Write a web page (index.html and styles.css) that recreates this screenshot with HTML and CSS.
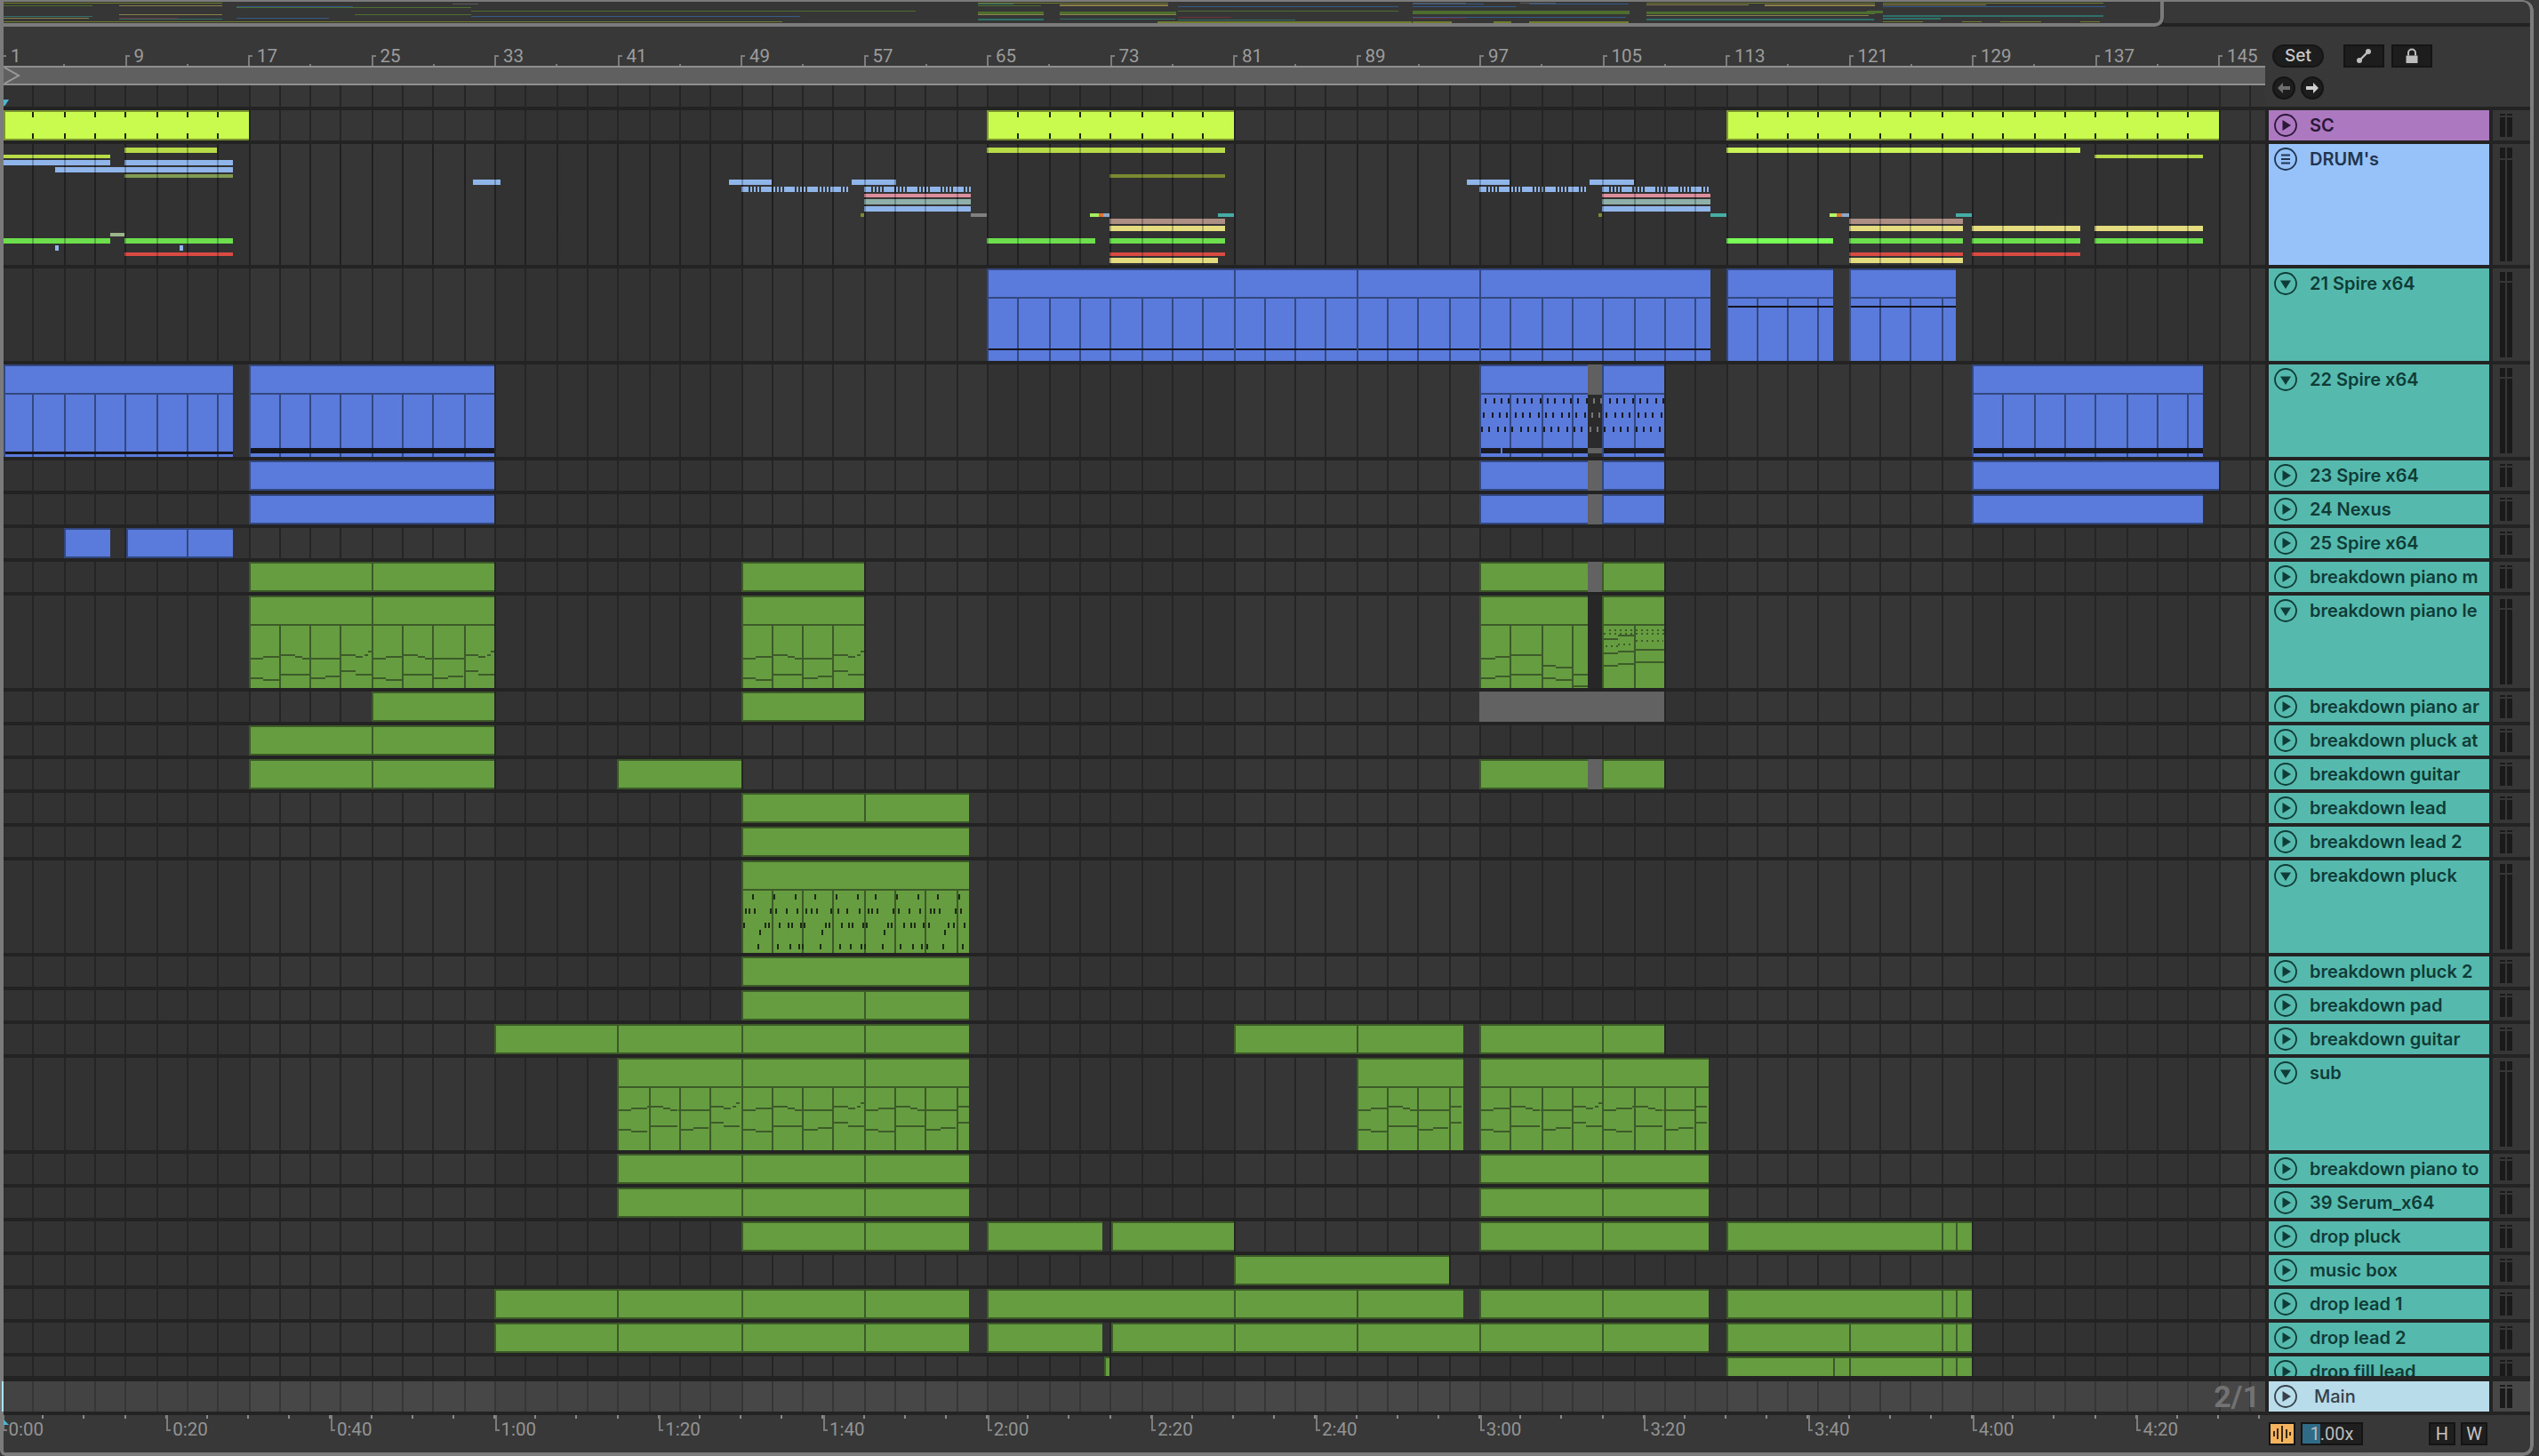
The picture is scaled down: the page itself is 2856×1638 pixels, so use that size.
FILE: index.html
```html
<!DOCTYPE html>
<html lang="en">
<head>
<meta charset="utf-8">
<title>Arrangement</title>
<link rel="stylesheet" href="styles.css">
</head>
<body>
<svg class="defs" width="0" height="0">
  <defs>
    <symbol id="i-play" viewBox="0 0 26 26"><circle cx="13" cy="13" r="12" fill="none" stroke="currentColor" stroke-width="1.8"/><path d="M9.5 7L19 13L9.5 19Z" fill="currentColor"/></symbol>
    <symbol id="i-down" viewBox="0 0 26 26"><circle cx="13" cy="13" r="12" fill="none" stroke="currentColor" stroke-width="1.8"/><path d="M7 9.5H19L13 19Z" fill="currentColor"/></symbol>
    <symbol id="i-group" viewBox="0 0 26 26"><circle cx="13" cy="13" r="12" fill="none" stroke="currentColor" stroke-width="1.8"/><path d="M8 8.5H18M8 13H18M8 17.5H18" stroke="currentColor" stroke-width="2"/></symbol>
    <path id="dash" d="M6 99h6M66 99h24M96 99h6M108 99h6M120 99h6M132 99h36M174 99h6M186 99h6M198 99h6M210 99h36M252 99h6M264 99h6M276 99h6M288 99h36M330 99h6M342 99h6M354 99h6M366 99h36M408 99h6M420 99h6" stroke-width="18" fill="none"/>
    <path id="dash-b" d="M66 99h24M96 99h6M108 99h6M120 99h6M132 99h36M174 99h6M186 99h6M198 99h6M210 99h36M252 99h6M264 99h6M276 99h6M288 99h36M330 99h6M342 99h6M354 99h6M366 99h36M408 99h6M420 99h6" stroke-width="18" fill="none"/>
    <path id="le-a" d="M66 362H108M108 356H162M162 350H216M216 356H240M240 362H264M268 362H320M320 362H372M372 350H420M420 356H444M450 350H462M462 338H474M66 428H108M108 434H162M168 416H210M210 416H264M270 428H318M318 422H368M372 404H420M420 416H474" stroke-width="6" fill="none"/>
    <path id="le-b" d="M66 362H108M108 356H162M162 350H216M216 356H240M240 362H264M268 362H320M320 362H372M372 350H414M66 428H108M108 434H162M168 416H210M210 416H264M270 428H318M318 422H368M372 404H414" stroke-width="6" fill="none"/>
  </defs>
</svg>

<div class="app">
  <div class="play-line"></div>
  <div class="overview-row">
    <div class="overview">
      <svg class="notes" width="2432" height="26" shape-rendering="crispEdges">
        <g fill="#6f7d2c"><rect x="4" y="3" width="246" height="1"/><rect x="1100" y="3" width="214" height="1"/><rect x="1852" y="3" width="257" height="1"/><rect x="2118" y="3" width="248" height="1"/><rect x="250" y="24" width="280" height="1"/><rect x="1302" y="24" width="286" height="2"/><rect x="1589" y="24" width="44" height="2"/><rect x="1680" y="24" width="20" height="2"/><rect x="1720" y="24" width="112" height="2"/><rect x="2118" y="24" width="45" height="1"/><rect x="2207" y="24" width="22" height="1"/><rect x="2250" y="24" width="46" height="1"/><rect x="2340" y="24" width="22" height="1"/><rect x="4" y="24" width="246" height="1"/><rect x="530" y="24" width="350" height="1"/></g>
        <g fill="#4e6e2f"><rect x="4" y="6" width="100" height="1"/><rect x="1100" y="6" width="71" height="1"/><rect x="266" y="8" width="264" height="1"/><rect x="399" y="16" width="131" height="1"/><rect x="530" y="12" width="500" height="1"/><rect x="1325" y="12" width="248" height="1"/><rect x="1589" y="12" width="244" height="4"/><rect x="1852" y="13" width="257" height="3"/><rect x="2100" y="12" width="18" height="3"/><rect x="1100" y="13" width="74" height="3"/><rect x="1192" y="13" width="131" height="3"/></g>
        <g fill="#8a7f4a"><rect x="134" y="6" width="116" height="1"/><rect x="1192" y="5" width="122" height="2"/><rect x="134" y="16" width="116" height="1"/><rect x="1100" y="16" width="74" height="1"/><rect x="1192" y="16" width="131" height="1"/><rect x="1852" y="17" width="250" height="1"/><rect x="1852" y="5" width="115" height="1"/><rect x="1985" y="5" width="124" height="2"/><rect x="2118" y="5" width="116" height="1"/><rect x="4" y="20" width="96" height="1"/></g>
        <g fill="#365a88"><rect x="266" y="7" width="131" height="1"/><rect x="1325" y="7" width="248" height="1"/><rect x="1589" y="7" width="116" height="1"/><rect x="1720" y="4" width="112" height="1"/><rect x="1589" y="4" width="80" height="1"/><rect x="2118" y="7" width="250" height="1"/><rect x="266" y="20" width="104" height="1"/><rect x="530" y="18" width="370" height="1"/><rect x="1589" y="19" width="240" height="1"/></g>
        <g fill="#2f6f6a"><rect x="134" y="21" width="116" height="1"/><rect x="4" y="18" width="100" height="1"/><rect x="1100" y="21" width="74" height="2"/><rect x="1192" y="21" width="130" height="1"/><rect x="1325" y="22" width="132" height="1"/><rect x="1852" y="21" width="256" height="2"/><rect x="2118" y="17" width="248" height="2"/><rect x="2118" y="20" width="65" height="2"/><rect x="1100" y="4" width="40" height="1"/></g>
        <g fill="#6d2f3a"><rect x="134" y="20" width="66" height="1"/><rect x="1325" y="19" width="60" height="1"/><rect x="1589" y="20" width="60" height="1"/></g>
        <g fill="#5a5a5a"><rect x="509" y="4" width="29" height="1"/><rect x="1589" y="3" width="60" height="1"/><rect x="1710" y="3" width="40" height="1"/></g>
      </svg>
    </div>
    <div class="overview-tail"></div>
  </div>

  <div class="top-row">
    <div class="timeline">
      <div class="ruler">
        <div class="mark">1</div><div class="mark">9</div><div class="mark">17</div><div class="mark">25</div><div class="mark">33</div><div class="mark">41</div><div class="mark">49</div><div class="mark">57</div><div class="mark">65</div><div class="mark">73</div><div class="mark">81</div><div class="mark">89</div><div class="mark">97</div><div class="mark">105</div><div class="mark">113</div><div class="mark">121</div><div class="mark">129</div><div class="mark">137</div><div class="mark">145</div>
      </div>
      <div class="loop-strip">
        <svg class="loop-start" width="20" height="18"><path d="M1 0L17 9L1 18" fill="none" stroke="#9a9a9a" stroke-width="2"/></svg>
      </div>
      <div class="lane lane-blank">
        <svg class="notes" width="20" height="24"><path d="M4 16H10L5.5 23H4Z" fill="#4fb6cf"/></svg>
      </div>
    </div>
    <div class="controls">
      <div class="ctl-line">
        <div class="pill">Set</div>
        <div class="sq sq-first"><svg width="18" height="18" viewBox="0 0 18 18"><path d="M4 14L14 4" stroke="#bdbdbd" stroke-width="2.4"/><circle cx="4" cy="14" r="3" fill="#bdbdbd"/><circle cx="14" cy="4" r="3" fill="#bdbdbd"/></svg></div>
        <div class="sq"><svg width="18" height="18" viewBox="0 0 18 18"><path d="M2.500 8.500H15.500V17H2.500Z" fill="#bdbdbd"/><path d="M5 8.500V5.500a4 4 0 0 1 8 0V8.500" fill="none" stroke="#bdbdbd" stroke-width="2"/></svg></div>
      </div>
      <div class="ctl-line ctl-arrows">
        <div class="round"><svg width="16" height="14" viewBox="0 0 16 14"><path d="M7 1L1 7L7 13V9H15V5H7Z" fill="#6e6e6e"/></svg></div>
        <div class="round"><svg width="16" height="14" viewBox="0 0 16 14"><path d="M9 1L15 7L9 13V9H1V5H9Z" fill="#cfcfcf"/></svg></div>
      </div>
    </div>
  </div>

  <div class="tracks">

    <div class="track t34">
      <div class="lane">
        <div class="clip lime" style="left:4px;width:276px"></div>
        <div class="clip lime" style="left:1110px;width:278px"></div>
        <div class="clip lime" style="left:1942px;width:554px"></div>
      </div>
      <div class="hdr purple"><svg class="ic"><use href="#i-play"/></svg><span class="nm">SC</span></div>
      <div class="meter"><i></i><i></i></div>
    </div>

    <div class="track t136">
      <div class="lane">
        <svg class="notes" width="2548" height="136" shape-rendering="crispEdges">
          <g transform="translate(0,-162)">
            <g fill="#b7dc48"><rect x="140" y="166" width="104" height="6"/><rect x="4" y="174" width="120" height="4"/><rect x="1110" y="166" width="268" height="6"/><rect x="2356" y="174" width="122" height="4"/></g>
            <rect x="1942" y="166" width="398" height="6" fill="#c9f556"/>
            <g fill="#8fb5ea"><rect x="4" y="180" width="120" height="6"/><rect x="140" y="180" width="122" height="6"/><rect x="62" y="188" width="200" height="6"/><rect x="62" y="276" width="4" height="6"/><rect x="202" y="276" width="4" height="6"/><rect x="532" y="202" width="31" height="6"/><rect x="820" y="202" width="48" height="6"/><rect x="958" y="202" width="50" height="6"/><rect x="1650" y="202" width="48" height="6"/><rect x="1788" y="202" width="50" height="6"/><rect x="972" y="232" width="120" height="6"/><rect x="1802" y="232" width="122" height="6"/></g>
            <rect x="140" y="196" width="122" height="4" fill="#7f9c52"/>
            <rect x="1248" y="196" width="130" height="4" fill="#7a8a30"/>
            <rect x="124" y="262" width="16" height="4" fill="#9cb58a"/>
            <g fill="#6be04c"><rect x="4" y="268" width="120" height="6"/><rect x="140" y="268" width="122" height="6"/><rect x="1110" y="268" width="122" height="6"/><rect x="1248" y="268" width="130" height="6"/><rect x="2080" y="268" width="128" height="6"/><rect x="2218" y="268" width="122" height="6"/><rect x="2356" y="268" width="122" height="6"/></g>
            <rect x="1942" y="268" width="120" height="6" fill="#78ff58"/>
            <g fill="#d84a42"><rect x="140" y="284" width="122" height="4"/><rect x="1248" y="284" width="130" height="4"/><rect x="2080" y="284" width="128" height="4"/><rect x="2218" y="284" width="122" height="4"/></g>
            <g fill="#dd8e9c"><rect x="972" y="218" width="120" height="4"/><rect x="1802" y="218" width="122" height="4"/></g>
            <g fill="#8fb0a8"><rect x="972" y="224" width="120" height="6"/><rect x="1802" y="224" width="122" height="6"/></g>
            <g fill="#808080"><rect x="1092" y="240" width="18" height="4"/></g>
            <rect x="968" y="240" width="4" height="4" fill="#7a8a30"/><rect x="1798" y="240" width="4" height="4" fill="#7a8a30"/>
            <g fill="#46aca6"><rect x="1370" y="240" width="18" height="4"/><rect x="1924" y="240" width="18" height="4"/><rect x="2200" y="240" width="18" height="4"/></g>
            <rect x="1226" y="240" width="10" height="4" fill="#a6ee60"/><rect x="1236" y="240" width="5" height="4" fill="#e07030"/><rect x="1241" y="240" width="7" height="4" fill="#8ea8c8"/>
            <rect x="2058" y="240" width="8" height="4" fill="#b6f868"/><rect x="2066" y="240" width="6" height="4" fill="#e07030"/><rect x="2072" y="240" width="8" height="4" fill="#8ea8c8"/>
            <g fill="#ae8f84"><rect x="1248" y="246" width="130" height="6"/><rect x="2080" y="246" width="128" height="6"/></g>
            <g fill="#e4dc7e"><rect x="1248" y="254" width="130" height="6"/><rect x="1248" y="290" width="122" height="6"/><rect x="2080" y="254" width="128" height="6"/><rect x="2080" y="290" width="128" height="6"/><rect x="2218" y="254" width="122" height="6"/><rect x="2356" y="254" width="122" height="6"/></g>
          </g>
          <g stroke="#8fb5ea">
            <use href="#dash" transform="translate(1780,18) scale(.3333)"/>
            <use href="#dash-b" transform="translate(1642,18) scale(.3333)"/>
            <use href="#dash-b" transform="translate(950,18) scale(.3333)"/>
            <use href="#dash-b" transform="translate(812,18) scale(.3333)"/>
          </g>
        </svg>
        <div class="over"></div>
      </div>
      <div class="hdr blue"><svg class="ic"><use href="#i-group"/></svg><span class="nm">DRUM's</span></div>
      <div class="meter seg12"><i></i><i></i></div>
    </div>

    <div class="track t104">
      <div class="lane">
        <div class="clip b tall" style="left:1110px;width:278px"><div class="title"></div><div class="body"><span class="bk k92"></span></div></div>
        <div class="clip b tall" style="left:1388px;width:138px"><div class="title"></div><div class="body"><span class="bk k92"></span></div></div>
        <div class="clip b tall" style="left:1526px;width:138px"><div class="title"></div><div class="body"><span class="bk k92"></span></div></div>
        <div class="clip b tall" style="left:1664px;width:260px"><div class="title"></div><div class="body"><span class="bk k92"></span></div></div>
        <div class="clip b tall" style="left:1942px;width:120px"><div class="title"></div><div class="body"><span class="bk k44"></span></div></div>
        <div class="clip b tall" style="left:2080px;width:120px"><div class="title"></div><div class="body"><span class="bk k44"></span></div></div>
      </div>
      <div class="hdr teal"><svg class="ic"><use href="#i-down"/></svg><span class="nm">21 Spire x64</span></div>
      <div class="meter seg10"><i></i><i></i></div>
    </div>

    <div class="track t104">
      <div class="lane">
        <div class="clip b tall" style="left:4px;width:258px"><div class="title"></div><div class="body"><span class="bk k100"></span></div></div>
        <div class="clip b tall" style="left:280px;width:276px"><div class="title"></div><div class="body"><span class="bk k96"></span></div></div>
        <div class="clip b tall" style="left:1664px;width:122px"><div class="title"></div><div class="body"></div></div>
        <div class="clip mutegap" style="left:1786px;width:16px"></div>
        <div class="clip b tall" style="left:1802px;width:70px"><div class="title"></div><div class="body"></div></div>
        <div class="clip b tall" style="left:2218px;width:260px"><div class="title"></div><div class="body"><span class="bk k96"></span></div></div>
        <svg class="notes" width="2548" height="104" shape-rendering="crispEdges">
          <g transform="translate(1640,-10) scale(.3333)" fill="none">
            <path stroke="#1a1a22" stroke-width="6" d="M93 144v18M123 144v18M147 144v18M171 144v18M201 144v18M225 144v18M249 144v18M279 144v18M303 144v18M327 144v18M357 144v18M381 144v18M405 144v18M435 144v18M513 144v18M537 144v18M561 144v18M591 144v18M615 144v18M639 144v18M669 144v18M693 144v18M87 192v18M117 192v18M141 192v18M165 192v18M195 192v18M219 192v18M243 192v18M273 192v18M297 192v18M321 192v18M351 192v18M375 192v18M399 192v18M429 192v18M501 192v18M531 192v18M555 192v18M579 192v18M609 192v18M633 192v18M657 192v18M687 192v18M81 240v18M105 240v18M135 240v18M159 240v18M183 240v18M213 240v18M237 240v18M261 240v18M291 240v18M315 240v18M339 240v18M369 240v18M393 240v18M417 240v18M495 240v18M525 240v18M549 240v18M573 240v18M603 240v18M627 240v18M651 240v18M681 240v18"/>
            <path stroke="#777" stroke-width="6" d="M459 144v18M483 144v18M453 192v18M477 192v18M447 240v18M471 240v18"/>
            <path stroke="#1a1a22" stroke-width="18" d="M78 321H144M150 321H438M492 321H696"/>
          </g>
        </svg>
      </div>
      <div class="hdr teal"><svg class="ic"><use href="#i-down"/></svg><span class="nm">22 Spire x64</span></div>
      <div class="meter seg10"><i></i><i></i></div>
    </div>

    <div class="track t34">
      <div class="lane">
        <div class="clip b" style="left:280px;width:276px"></div>
        <div class="clip b" style="left:1664px;width:122px"></div><div class="clip mute" style="left:1786px;width:16px"></div><div class="clip b" style="left:1802px;width:70px"></div>
        <div class="clip b" style="left:2218px;width:278px"></div>
      </div>
      <div class="hdr teal"><svg class="ic"><use href="#i-play"/></svg><span class="nm">23 Spire x64</span></div>
      <div class="meter"><i></i><i></i></div>
    </div>

    <div class="track t34">
      <div class="lane">
        <div class="clip b" style="left:280px;width:276px"></div>
        <div class="clip b" style="left:1664px;width:122px"></div><div class="clip mute" style="left:1786px;width:16px"></div><div class="clip b" style="left:1802px;width:70px"></div>
        <div class="clip b" style="left:2218px;width:260px"></div>
      </div>
      <div class="hdr teal"><svg class="ic"><use href="#i-play"/></svg><span class="nm">24 Nexus</span></div>
      <div class="meter"><i></i><i></i></div>
    </div>

    <div class="track t34">
      <div class="lane">
        <div class="clip b" style="left:72px;width:52px"></div>
        <div class="clip b" style="left:142px;width:68px"></div>
        <div class="clip b" style="left:210px;width:52px"></div>
      </div>
      <div class="hdr teal"><svg class="ic"><use href="#i-play"/></svg><span class="nm">25 Spire x64</span></div>
      <div class="meter"><i></i><i></i></div>
    </div>

    <div class="track t34">
      <div class="lane">
        <div class="clip g" style="left:280px;width:138px"></div><div class="clip g" style="left:418px;width:138px"></div>
        <div class="clip g" style="left:834px;width:138px"></div>
        <div class="clip g" style="left:1664px;width:122px"></div><div class="clip mute" style="left:1786px;width:16px"></div><div class="clip g" style="left:1802px;width:70px"></div>
      </div>
      <div class="hdr teal"><svg class="ic"><use href="#i-play"/></svg><span class="nm">breakdown piano m</span></div>
      <div class="meter"><i></i><i></i></div>
    </div>

    <div class="track t104">
      <div class="lane">
        <div class="clip g tall" style="left:280px;width:138px"><div class="title"></div><div class="body"></div></div>
        <div class="clip g tall" style="left:418px;width:138px"><div class="title"></div><div class="body"></div></div>
        <div class="clip g tall" style="left:834px;width:138px"><div class="title"></div><div class="body"></div></div>
        <div class="clip g tall" style="left:1664px;width:122px"><div class="title"></div><div class="body"></div></div>
        <div class="clip void" style="left:1786px;width:16px"></div>
        <div class="clip g tall" style="left:1802px;width:70px"><div class="title"></div><div class="body"></div></div>
        <svg class="notes" width="2548" height="104" shape-rendering="crispEdges">
          <g stroke="#3e5c2a">
            <use href="#le-a" transform="translate(260,-50) scale(.3333)"/>
            <use href="#le-a" transform="translate(398,-50) scale(.3333)"/>
            <use href="#le-a" transform="translate(814,-50) scale(.3333)"/>
            <g transform="translate(1640,-270) scale(.3333)" fill="none" stroke-width="6">
              <path d="M78 1022H126M126 1016H180M180 1010H282M288 1046H330M330 1052H384M390 1076H438M78 1088H126M126 1082H174M180 1076H282M288 1088H330M330 1094H384M390 1116H438"/>
              <path d="M492 957H540M540 945H594M492 1005H540M540 999H594M600 993H696M492 1047H540M540 1041H594M600 1035H696"/>
              <path stroke-dasharray="6 12" d="M492 939H696M498 981H540M540 975H590M600 963H692M510 927H696"/>
            </g>
          </g>
        </svg>
      </div>
      <div class="hdr teal"><svg class="ic"><use href="#i-down"/></svg><span class="nm">breakdown piano le</span></div>
      <div class="meter seg10"><i></i><i></i></div>
    </div>

    <div class="track t34">
      <div class="lane">
        <div class="clip g" style="left:418px;width:138px"></div>
        <div class="clip g" style="left:834px;width:138px"></div>
        <div class="clip mute" style="left:1664px;width:208px"></div>
      </div>
      <div class="hdr teal"><svg class="ic"><use href="#i-play"/></svg><span class="nm">breakdown piano ar</span></div>
      <div class="meter"><i></i><i></i></div>
    </div>

    <div class="track t34">
      <div class="lane">
        <div class="clip g" style="left:280px;width:138px"></div><div class="clip g" style="left:418px;width:138px"></div>
      </div>
      <div class="hdr teal"><svg class="ic"><use href="#i-play"/></svg><span class="nm">breakdown pluck at</span></div>
      <div class="meter"><i></i><i></i></div>
    </div>

    <div class="track t34">
      <div class="lane">
        <div class="clip g" style="left:280px;width:138px"></div><div class="clip g" style="left:418px;width:138px"></div>
        <div class="clip g" style="left:694px;width:140px"></div>
        <div class="clip g" style="left:1664px;width:122px"></div><div class="clip mute" style="left:1786px;width:16px"></div><div class="clip g" style="left:1802px;width:70px"></div>
      </div>
      <div class="hdr teal"><svg class="ic"><use href="#i-play"/></svg><span class="nm">breakdown guitar</span></div>
      <div class="meter"><i></i><i></i></div>
    </div>

    <div class="track t34">
      <div class="lane">
        <div class="clip g" style="left:834px;width:138px"></div><div class="clip g" style="left:972px;width:118px"></div>
      </div>
      <div class="hdr teal"><svg class="ic"><use href="#i-play"/></svg><span class="nm">breakdown lead</span></div>
      <div class="meter"><i></i><i></i></div>
    </div>

    <div class="track t34">
      <div class="lane">
        <div class="clip g" style="left:834px;width:256px"></div>
      </div>
      <div class="hdr teal"><svg class="ic"><use href="#i-play"/></svg><span class="nm">breakdown lead 2</span></div>
      <div class="meter"><i></i><i></i></div>
    </div>

    <div class="track t104">
      <div class="lane">
        <div class="clip g tall" style="left:834px;width:256px"><div class="title"></div><div class="body"></div></div>
        <svg class="notes" width="2548" height="104" shape-rendering="crispEdges">
          <path transform="translate(820,-18) scale(.3333)" fill="none" stroke="#1d2a14" stroke-width="6" d="M81 168v18M153 168v18M225 168v18M291 168v18M363 168v18M435 168v18M495 168v18M567 168v18M639 168v18M705 168v18M777 168v18M57 216v18M69 216v18M87 216v18M141 216v18M159 216v18M195 216v18M231 216v18M261 216v18M279 216v18M297 216v18M345 216v18M369 216v18M399 216v18M441 216v18M471 216v18M483 216v18M501 216v18M555 216v18M573 216v18M609 216v18M645 216v18M681 216v18M693 216v18M711 216v18M765 216v18M783 216v18M51 264v18M123 264v18M135 264v18M171 264v18M201 264v18M213 264v18M243 264v18M255 264v18M327 264v18M339 264v18M381 264v18M405 264v18M417 264v18M453 264v18M465 264v18M537 264v18M549 264v18M591 264v18M615 264v18M627 264v18M657 264v18M675 264v18M741 264v18M759 264v18M795 264v18M105 288v18M315 288v18M525 288v18M729 288v18M99 336v18M165 336v18M207 336v18M237 336v18M249 336v18M309 336v18M375 336v18M411 336v18M447 336v18M459 336v18M519 336v18M579 336v18M621 336v18M651 336v18M669 336v18M723 336v18M789 336v18"/>
        </svg>
      </div>
      <div class="hdr teal"><svg class="ic"><use href="#i-down"/></svg><span class="nm">breakdown pluck</span></div>
      <div class="meter seg10"><i></i><i></i></div>
    </div>

    <div class="track t34">
      <div class="lane">
        <div class="clip g" style="left:834px;width:256px"></div>
      </div>
      <div class="hdr teal"><svg class="ic"><use href="#i-play"/></svg><span class="nm">breakdown pluck 2</span></div>
      <div class="meter"><i></i><i></i></div>
    </div>

    <div class="track t34">
      <div class="lane">
        <div class="clip g" style="left:834px;width:138px"></div><div class="clip g" style="left:972px;width:118px"></div>
      </div>
      <div class="hdr teal"><svg class="ic"><use href="#i-play"/></svg><span class="nm">breakdown pad</span></div>
      <div class="meter"><i></i><i></i></div>
    </div>

    <div class="track t34">
      <div class="lane">
        <div class="clip g" style="left:556px;width:138px"></div><div class="clip g" style="left:694px;width:140px"></div><div class="clip g" style="left:834px;width:138px"></div><div class="clip g" style="left:972px;width:118px"></div>
        <div class="clip g" style="left:1388px;width:138px"></div><div class="clip g" style="left:1526px;width:120px"></div>
        <div class="clip g" style="left:1664px;width:138px"></div><div class="clip g" style="left:1802px;width:70px"></div>
      </div>
      <div class="hdr teal"><svg class="ic"><use href="#i-play"/></svg><span class="nm">breakdown guitar</span></div>
      <div class="meter"><i></i><i></i></div>
    </div>

    <div class="track t104">
      <div class="lane">
        <div class="clip g tall" style="left:694px;width:140px"><div class="title"></div><div class="body"></div></div>
        <div class="clip g tall" style="left:834px;width:138px"><div class="title"></div><div class="body"></div></div>
        <div class="clip g tall" style="left:972px;width:118px"><div class="title"></div><div class="body"></div></div>
        <div class="clip g tall" style="left:1526px;width:120px"><div class="title"></div><div class="body"></div></div>
        <div class="clip g tall" style="left:1664px;width:138px"><div class="title"></div><div class="body"></div></div>
        <div class="clip g tall" style="left:1802px;width:120px"><div class="title"></div><div class="body"></div></div>
        <svg class="notes" width="2548" height="104" shape-rendering="crispEdges">
          <g stroke="#3e5c2a">
            <use href="#le-a" transform="translate(674,-62) scale(.3333)"/>
            <use href="#le-a" transform="translate(814,-62) scale(.3333)"/>
            <use href="#le-b" transform="translate(952,-62) scale(.3333)"/>
            <use href="#le-b" transform="translate(1506,-62) scale(.3333)"/>
            <use href="#le-a" transform="translate(1644,-62) scale(.3333)"/>
            <use href="#le-b" transform="translate(1782,-62) scale(.3333)"/>
          </g>
        </svg>
      </div>
      <div class="hdr teal"><svg class="ic"><use href="#i-down"/></svg><span class="nm">sub</span></div>
      <div class="meter seg10"><i></i><i></i></div>
    </div>

    <div class="track t34">
      <div class="lane">
        <div class="clip g" style="left:694px;width:140px"></div><div class="clip g" style="left:834px;width:138px"></div><div class="clip g" style="left:972px;width:118px"></div>
        <div class="clip g" style="left:1664px;width:138px"></div><div class="clip g" style="left:1802px;width:120px"></div>
      </div>
      <div class="hdr teal"><svg class="ic"><use href="#i-play"/></svg><span class="nm">breakdown piano to</span></div>
      <div class="meter"><i></i><i></i></div>
    </div>

    <div class="track t34">
      <div class="lane">
        <div class="clip g" style="left:694px;width:140px"></div><div class="clip g" style="left:834px;width:138px"></div><div class="clip g" style="left:972px;width:118px"></div>
        <div class="clip g" style="left:1664px;width:138px"></div><div class="clip g" style="left:1802px;width:120px"></div>
      </div>
      <div class="hdr teal"><svg class="ic"><use href="#i-play"/></svg><span class="nm">39 Serum_x64</span></div>
      <div class="meter"><i></i><i></i></div>
    </div>

    <div class="track t34">
      <div class="lane">
        <div class="clip g" style="left:834px;width:138px"></div><div class="clip g" style="left:972px;width:118px"></div>
        <div class="clip g" style="left:1110px;width:130px"></div>
        <div class="clip g" style="left:1250px;width:138px"></div>
        <div class="clip g" style="left:1664px;width:138px"></div><div class="clip g" style="left:1802px;width:120px"></div>
        <div class="clip g" style="left:1942px;width:242px"></div><div class="clip g" style="left:2184px;width:16px"></div><div class="clip g" style="left:2200px;width:18px"></div>
      </div>
      <div class="hdr teal"><svg class="ic"><use href="#i-play"/></svg><span class="nm">drop pluck</span></div>
      <div class="meter"><i></i><i></i></div>
    </div>

    <div class="track t34">
      <div class="lane">
        <div class="clip g" style="left:1388px;width:242px"></div>
      </div>
      <div class="hdr teal"><svg class="ic"><use href="#i-play"/></svg><span class="nm">music box</span></div>
      <div class="meter"><i></i><i></i></div>
    </div>

    <div class="track t34">
      <div class="lane">
        <div class="clip g" style="left:556px;width:138px"></div><div class="clip g" style="left:694px;width:140px"></div><div class="clip g" style="left:834px;width:138px"></div><div class="clip g" style="left:972px;width:118px"></div>
        <div class="clip g" style="left:1110px;width:278px"></div><div class="clip g" style="left:1388px;width:138px"></div><div class="clip g" style="left:1526px;width:120px"></div>
        <div class="clip g" style="left:1664px;width:138px"></div><div class="clip g" style="left:1802px;width:120px"></div>
        <div class="clip g" style="left:1942px;width:242px"></div><div class="clip g" style="left:2184px;width:16px"></div><div class="clip g" style="left:2200px;width:18px"></div>
      </div>
      <div class="hdr teal"><svg class="ic"><use href="#i-play"/></svg><span class="nm">drop lead 1</span></div>
      <div class="meter"><i></i><i></i></div>
    </div>

    <div class="track t34">
      <div class="lane">
        <div class="clip g" style="left:556px;width:138px"></div><div class="clip g" style="left:694px;width:140px"></div><div class="clip g" style="left:834px;width:138px"></div><div class="clip g" style="left:972px;width:118px"></div>
        <div class="clip g" style="left:1110px;width:130px"></div>
        <div class="clip g" style="left:1250px;width:138px"></div><div class="clip g" style="left:1388px;width:138px"></div><div class="clip g" style="left:1526px;width:138px"></div><div class="clip g" style="left:1664px;width:138px"></div><div class="clip g" style="left:1802px;width:120px"></div>
        <div class="clip g" style="left:1942px;width:138px"></div><div class="clip g" style="left:2080px;width:104px"></div><div class="clip g" style="left:2184px;width:16px"></div><div class="clip g" style="left:2200px;width:18px"></div>
      </div>
      <div class="hdr teal"><svg class="ic"><use href="#i-play"/></svg><span class="nm">drop lead 2</span></div>
      <div class="meter"><i></i><i></i></div>
    </div>

    <div class="track t34">
      <div class="lane">
        <div class="clip g" style="left:1242px;width:6px"></div>
        <div class="clip g" style="left:1942px;width:120px"></div><div class="clip g" style="left:2062px;width:18px"></div><div class="clip g" style="left:2080px;width:104px"></div><div class="clip g" style="left:2184px;width:16px"></div><div class="clip g" style="left:2200px;width:18px"></div>
      </div>
      <div class="hdr teal"><svg class="ic"><use href="#i-play"/></svg><span class="nm">drop fill lead</span></div>
      <div class="meter"><i></i><i></i></div>
    </div>

  </div>

  <div class="track t34 main-track">
    <div class="lane lane-main"><span class="sig">2/1</span></div>
    <div class="hdr sky"><svg class="ic"><use href="#i-play"/></svg><span class="nm">Main</span></div>
    <div class="meter"><i></i><i></i></div>
  </div>

  <div class="footer">
    <div class="time">
      <svg class="bottom-flag" width="12" height="10"><path d="M2 0L10 8H2Z" fill="#4fb6cf"/></svg>
      <div class="tl">0:00</div><div class="tl">0:20</div><div class="tl">0:40</div><div class="tl">1:00</div><div class="tl">1:20</div><div class="tl">1:40</div><div class="tl">2:00</div><div class="tl">2:20</div><div class="tl">2:40</div><div class="tl">3:00</div><div class="tl">3:20</div><div class="tl">3:40</div><div class="tl">4:00</div><div class="tl">4:20</div>
    </div>
    <div class="foot-ctl">
      <div class="wave"><svg width="22" height="18" viewBox="0 0 22 18"><path d="M2 6V12M6 3V15M11 0V18M16 4V14M20 7V11" stroke="#3b2a12" stroke-width="2"/></svg></div>
      <div class="zoomf"><span class="zoomv">1.00x</span></div>
      <div class="key key-h">H</div>
      <div class="key">W</div>
    </div>
  </div>

  <div class="frame"></div>
</div>
</body>
</html>
```
FILE: styles.css
```css
* { box-sizing: border-box; }
html, body { margin: 0; padding: 0; background: #3a3a3a; }
body { width: 2856px; height: 1638px; overflow: hidden; font-family: Inter, "Liberation Sans", sans-serif; }
.defs { position: absolute; }

.app {
  position: relative;
  width: 2850px;
  height: 1638px;
  background: #232323;
  overflow: hidden;
  border-radius: 0 12px 12px 6px;
  display: flex;
  flex-direction: column;
}
.frame {
  position: absolute;
  inset: 0;
  border: 4px solid #7b7b7b;
  border-top-width: 2px;
  border-radius: 0 12px 12px 6px;
  pointer-events: none;
  z-index: 5;
}
.play-line {
  position: absolute;
  left: 2px;
  top: 1554px;
  width: 2px;
  height: 34px;
  background: #a9e2f2;
  z-index: 6;
}

/* overview */
.overview-row { display: flex; height: 30px; flex: none; }
.overview {
  position: relative;
  width: 2434px;
  background: #363636;
  border: 4px solid #7b7b7b;
  border-left: 0;
  border-top: 0;
  border-radius: 0 0 10px 0;
  overflow: hidden;
}
.overview-tail { flex: 1; background: #383838; border-bottom: 4px solid #232323; }

/* top */
.top-row { display: flex; height: 90px; flex: none; background: #383838; margin-bottom: 4px; }
.timeline { width: 2548px; flex: none; display: flex; flex-direction: column; }
.ruler { height: 44px; display: flex; padding-left: 2px; overflow: hidden; flex: none; }
.mark {
  position: relative;
  flex: none;
  width: 138.5px;
  padding: 23px 0 0 10px;
  font-family: Roboto, "Liberation Sans", sans-serif;
  font-size: 20.5px;
  line-height: 20px;
  color: #9c9c9c;
}
.mark::before {
  content: "";
  position: absolute;
  left: 0;
  top: 32px;
  width: 3px;
  height: 12px;
  border-left: 2px solid #7c7c7c;
  border-top: 2px solid #7c7c7c;
}
.mark::after {
  content: "";
  position: absolute;
  left: 69px;
  bottom: 0;
  width: 2px;
  height: 2px;
  background: #7c7c7c;
}
.loop-strip {
  position: relative;
  height: 22px;
  flex: none;
  background: #606060;
  border-top: 2px solid #8f8f8f;
  border-bottom: 2px solid #8f8f8f;
}
.loop-start { position: absolute; left: 4px; top: 0; }
.controls { flex: 1; padding: 20px 0 0 8px; }
.ctl-line { display: flex; align-items: center; height: 26px; }
.ctl-arrows { margin-top: 10px; gap: 6px; }
.pill {
  width: 58px;
  height: 26px;
  border-radius: 13px;
  background: #1d1d1d;
  border: 2px solid #161616;
  color: #c8c8c8;
  font-size: 19px;
  font-weight: 500;
  line-height: 22px;
  text-align: center;
}
.sq {
  width: 46px;
  height: 26px;
  margin-left: 8px;
  background: #1d1d1d;
  border: 2px solid #141414;
  display: flex;
  align-items: center;
  justify-content: center;
}
.sq-first { margin-left: 22px; }
.round {
  width: 26px;
  height: 26px;
  border-radius: 50%;
  background: #1d1d1d;
  border: 2px solid #141414;
  display: flex;
  align-items: center;
  justify-content: center;
}

/* tracks */
.tracks {
  height: 1424px;
  flex: none;
  overflow: hidden;
  display: flex;
  flex-direction: column;
  gap: 4px;
  margin-bottom: 6px;
}
.track { display: flex; flex: none; gap: 4px; }
.t34 { height: 34px; }
.t104 { height: 104px; }
.t136 { height: 136px; }
.main-track { margin-bottom: 4px; }

.lane, .body, .over, .clip.lime::before, .clip.lime::after {
  --lines: repeating-linear-gradient(90deg,
    transparent 0 2px, var(--g) 2px 4px,
    transparent 4px 36px, var(--g) 36px 38px,
    transparent 38px 72px, var(--g) 72px 74px,
    transparent 74px 106px, var(--g) 106px 108px,
    transparent 108px 140px, var(--g) 140px 142px,
    transparent 142px 176px, var(--g) 176px 178px,
    transparent 178px 210px, var(--g) 210px 212px,
    transparent 212px 244px, var(--g) 244px 246px,
    transparent 246px 280px, var(--g) 280px 282px,
    transparent 282px 314px, var(--g) 314px 316px,
    transparent 316px 348px, var(--g) 348px 350px,
    transparent 350px 382px, var(--g) 382px 384px,
    transparent 384px 418px, var(--g) 418px 420px,
    transparent 420px 452px, var(--g) 452px 454px,
    transparent 454px 486px, var(--g) 486px 488px,
    transparent 488px 522px, var(--g) 522px 524px,
    transparent 524px 554px);
}
.lane {
  --g: #252525;
  --d: #323232;
  --l: #363636;
  position: relative;
  flex: none;
  width: 2548px;
  height: 100%;
  overflow: hidden;
  background-color: var(--d);
  background-image: var(--lines),
    repeating-linear-gradient(90deg, var(--l) 0 2px, var(--d) 2px 280px, var(--l) 280px 554px);
  background-attachment: fixed, fixed;
}
.lane-blank { height: 24px; }
.lane-main { --g: #363636; --d: #434343; --l: #474747; overflow: visible; }
.sig {
  position: absolute;
  right: 6px;
  top: 0;
  font-family: Roboto, "Liberation Sans", sans-serif;
  font-size: 34px;
  font-weight: 700;
  line-height: 34px;
  color: #727272;
}
.notes { position: absolute; left: 0; top: 0; display: block; overflow: hidden; }
.over {
  --g: rgba(20, 20, 30, .28);
  position: absolute;
  inset: 0;
  background-image: var(--lines);
  background-attachment: fixed;
}

/* clips */
.clip {
  position: absolute;
  top: 0;
  bottom: 0;
  background: var(--fill);
  border: 2px solid var(--edge);
  border-right: 0;
}
.b { --fill: #5b7bdc; --edge: #33487e; }
.g { --fill: #669d40; --edge: #3d5b29; }
.lime { --fill: #c8fb4d; --edge: #7c9632; }
.mute { background: #626262; border: 0; }
.void { background: #272727; border: 0; }
.mutegap {
  border: 0;
  background: linear-gradient(#606060 0 34px, #2b2b2b 34px 94px, #606060 94px 100px, #2b2b2b 100px);
}
.clip.tall { border-bottom: 0; display: flex; flex-direction: column; }
.title { height: 30px; flex: none; border-bottom: 0; }
.body {
  --g: var(--edge);
  position: relative;
  flex: 1;
  border-top: 2px solid var(--edge);
  background-image: var(--lines);
  background-attachment: fixed;
}
.bk { position: absolute; left: 0; right: 0; background: #15151d; height: 2px; }
.k92 { top: 56px; }
.k44 { top: 8px; }
.k96 { top: 60px; height: 6px; }
.k100 { top: 64px; height: 3px; }
.clip.lime::before, .clip.lime::after {
  --g: #1f2410;
  content: "";
  position: absolute;
  left: 0;
  right: 0;
  height: 6px;
  background-image: var(--lines);
  background-attachment: fixed;
}
.clip.lime::before { top: 0; }
.clip.lime::after { bottom: 0; }

/* track headers */
.hdr {
  flex: none;
  width: 248px;
  height: 100%;
  display: flex;
  align-items: flex-start;
  gap: 14px;
  padding: 4px 0 0 6px;
  overflow: hidden;
  color: var(--ink);
}
.ic { width: 26px; height: 26px; flex: none; color: var(--ink); }
.nm {
  margin-top: -4px;
  font-size: 20px;
  font-weight: 600;
  line-height: 34px;
  white-space: nowrap;
}
.purple { background: #ac78bf; --ink: #2b1738; }
.blue { background: #96c1f9; --ink: #1f3550; }
.teal { background: #55baad; --ink: #103c37; }
.sky { background: #b8dcea; --ink: #37414a; }
.sky .nm { margin-left: 5px; font-weight: 500; }

.meter {
  --seg: 2px;
  flex: none;
  width: 42px;
  height: 100%;
  background: #363636;
  display: flex;
  gap: 2px;
  padding: 4px 0 4px 8px;
}
.meter i {
  width: 6px;
  display: block;
  background: linear-gradient(#1a1a1a 0 var(--seg), transparent var(--seg) calc(var(--seg) + 2px), #1a1a1a calc(var(--seg) + 2px));
}
.seg10 { --seg: 10px; }
.seg12 { --seg: 12px; }
.main-track .meter { background: #474747; }

/* footer */
.footer { flex: 1; display: flex; background: #383838; }
.time {
  position: relative;
  flex: none;
  width: 2552px;
  display: flex;
  padding-left: 2.5px;
  overflow: hidden;
  background-image: repeating-linear-gradient(90deg, transparent 0 44.17px, #8a8a8a 44.17px 46.17px);
  background-size: 100% 4px;
  background-repeat: no-repeat;
  background-position: 2.500px 0;
}
.bottom-flag { position: absolute; left: 0; top: 3px; z-index: 1; }
.tl {
  position: relative;
  flex: none;
  width: 184.7px;
  padding: 6px 0 0 7px;
  font-family: Roboto, "Liberation Sans", sans-serif;
  font-size: 20.5px;
  line-height: 20px;
  color: #939393;
}
.tl::before {
  content: "";
  position: absolute;
  left: 0;
  top: 0;
  width: 3px;
  height: 16px;
  border-left: 2px solid #7c7c7c;
  border-bottom: 2px solid #7c7c7c;
}
.foot-ctl { flex: 1; display: flex; align-items: flex-start; padding-top: 8px; }
.wave {
  width: 30px;
  height: 26px;
  background: #f4b35f;
  border: 2px solid #141414;
  display: flex;
  align-items: center;
  justify-content: center;
}
.zoomf {
  width: 70px;
  height: 26px;
  margin-left: 6px;
  background: linear-gradient(90deg, #2f6b86 0 20px, #1f1f1f 20px);
  border: 2px solid #141414;
  color: #bcbcbc;
  font-family: Roboto, "Liberation Sans", sans-serif;
  font-size: 20px;
  line-height: 22px;
  text-align: center;
}
.key {
  width: 30px;
  height: 26px;
  margin-left: 6px;
  background: #1f1f1f;
  border: 2px solid #141414;
  color: #c4c4c4;
  font-family: Roboto, "Liberation Sans", sans-serif;
  font-size: 20px;
  line-height: 22px;
  text-align: center;
}
.key-h { margin-left: 74px; }
```
